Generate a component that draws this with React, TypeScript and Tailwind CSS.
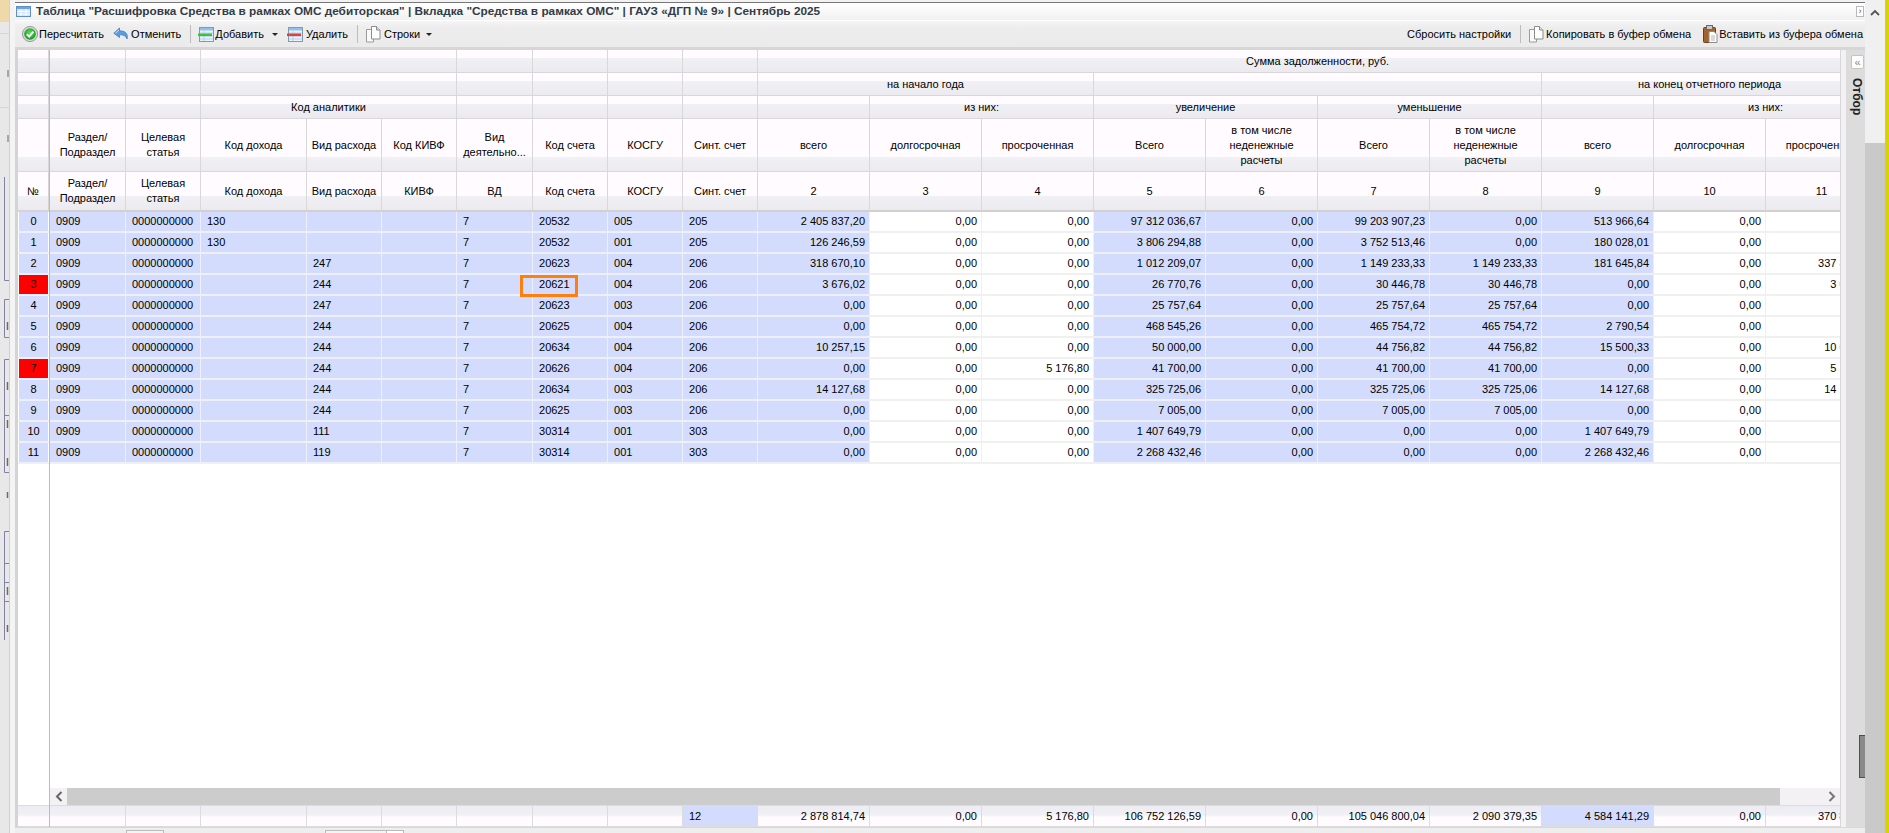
import type { ReactNode } from "react";

const colClasses = [
  "w-[76px]", "w-[75px]", "w-[106px]", "w-[75px]", "w-[75px]", "w-[76px]", "w-[75px]", "w-[75px]", "w-[75px]",
  "w-[112px]", "w-[112px]", "w-[112px]", "w-[112px]", "w-[112px]", "w-[112px]", "w-[112px]", "w-[112px]", "w-[112px]", "w-[112px]",
];

const whiteCols = [10, 11, 17, 18];
const leftCols = 9;

type HeadCell = { text?: ReactNode; span?: number };

const blank = (n: number): HeadCell[] => Array.from({ length: n }, () => ({}));

const headRows: { cls: string; cells: HeadCell[] }[] = [
  {
    cls: "h-[23px]",
    cells: [...blank(2), { span: 3 }, ...blank(4), { text: "Сумма задолженности, руб.", span: 10 }],
  },
  {
    cls: "h-[23px]",
    cells: [
      ...blank(2), { span: 3 }, ...blank(4),
      { text: "на начало года", span: 3 }, { span: 4 }, { text: "на конец отчетного периода", span: 3 },
    ],
  },
  {
    cls: "h-[23px]",
    cells: [
      ...blank(2), { text: "Код аналитики", span: 3 }, ...blank(4),
      {}, { text: "из них:", span: 2 }, { text: "увеличение", span: 2 }, { text: "уменьшение", span: 2 },
      {}, { text: "из них:", span: 2 },
    ],
  },
  {
    cls: "h-[53px]",
    cells: [
      { text: <>Раздел/<br />Подраздел</> }, { text: <>Целевая<br />статья</> }, { text: "Код дохода" }, { text: "Вид расхода" },
      { text: "Код КИВФ" }, { text: <>Вид<br />деятельно...</> }, { text: "Код счета" }, { text: "КОСГУ" }, { text: "Синт. счет" },
      { text: "всего" }, { text: "долгосрочная" }, { text: "просроченная" }, { text: "Всего" },
      { text: <>в том числе<br />неденежные<br />расчеты</> }, { text: "Всего" },
      { text: <>в том числе<br />неденежные<br />расчеты</> }, { text: "всего" }, { text: "долгосрочная" }, { text: "просроченная" },
    ],
  },
  {
    cls: "h-[40px]",
    cells: [
      { text: <>Раздел/<br />Подраздел</> }, { text: <>Целевая<br />статья</> }, { text: "Код дохода" }, { text: "Вид расхода" },
      { text: "КИВФ" }, { text: "ВД" }, { text: "Код счета" }, { text: "КОСГУ" }, { text: "Синт. счет" },
      { text: "2" }, { text: "3" }, { text: "4" }, { text: "5" }, { text: "6" }, { text: "7" }, { text: "8" }, { text: "9" }, { text: "10" }, { text: "11" },
    ],
  },
];

const rows: string[][] = [
  ["130", "", "", "7", "20532", "005", "205", "2 405 837,20", "0,00", "0,00", "97 312 036,67", "0,00", "99 203 907,23", "0,00", "513 966,64", "0,00", "0,00"],
  ["130", "", "", "7", "20532", "001", "205", "126 246,59", "0,00", "0,00", "3 806 294,88", "0,00", "3 752 513,46", "0,00", "180 028,01", "0,00", "0,00"],
  ["", "247", "", "7", "20623", "004", "206", "318 670,10", "0,00", "0,00", "1 012 209,07", "0,00", "1 149 233,33", "1 149 233,33", "181 645,84", "0,00", "337 845,67"],
  ["", "244", "", "7", "20621", "004", "206", "3 676,02", "0,00", "0,00", "26 770,76", "0,00", "30 446,78", "30 446,78", "0,00", "0,00", "3 076,02"],
  ["", "247", "", "7", "20623", "003", "206", "0,00", "0,00", "0,00", "25 757,64", "0,00", "25 757,64", "25 757,64", "0,00", "0,00", "0,00"],
  ["", "244", "", "7", "20625", "004", "206", "0,00", "0,00", "0,00", "468 545,26", "0,00", "465 754,72", "465 754,72", "2 790,54", "0,00", "0,00"],
  ["", "244", "", "7", "20634", "004", "206", "10 257,15", "0,00", "0,00", "50 000,00", "0,00", "44 756,82", "44 756,82", "15 500,33", "0,00", "10 033,15"],
  ["", "244", "", "7", "20626", "004", "206", "0,00", "0,00", "5 176,80", "41 700,00", "0,00", "41 700,00", "41 700,00", "0,00", "0,00", "5 176,80"],
  ["", "244", "", "7", "20634", "003", "206", "14 127,68", "0,00", "0,00", "325 725,06", "0,00", "325 725,06", "325 725,06", "14 127,68", "0,00", "14 127,68"],
  ["", "244", "", "7", "20625", "003", "206", "0,00", "0,00", "0,00", "7 005,00", "0,00", "7 005,00", "7 005,00", "0,00", "0,00", "0,00"],
  ["", "111", "", "7", "30314", "001", "303", "0,00", "0,00", "0,00", "1 407 649,79", "0,00", "0,00", "0,00", "1 407 649,79", "0,00", "0,00"],
  ["", "119", "", "7", "30314", "001", "303", "0,00", "0,00", "0,00", "2 268 432,46", "0,00", "0,00", "0,00", "2 268 432,46", "0,00", "0,00"],
];

const totals = ["", "", "", "", "", "", "", "", "12", "2 878 814,74", "0,00", "5 176,80", "106 752 126,59", "0,00", "105 046 800,04", "2 090 379,35", "4 584 141,29", "0,00", "370 857,47"];

const headBg =
  "bg-[linear-gradient(to_bottom,#fffbff_0,#fffbff_calc(100%-14px),#f0f1f5_calc(100%-14px),#eceaee_100%)]";
const footBg = "bg-[linear-gradient(to_bottom,#ecedf3_0,#f0f0f5_45%,#fffbff_55%,#fffbff_100%)]";

const Cols = () => (
  <colgroup>
    {colClasses.map((c, i) => (
      <col key={i} className={c} />
    ))}
  </colgroup>
);

const CheckIcon = () => (
  <svg width="16" height="16" viewBox="0 0 16 16" className="shrink-0">
    <defs>
      <radialGradient id="chk" cx="50%" cy="40%" r="60%">
        <stop offset="0" stopColor="#5fdc5a" />
        <stop offset="1" stopColor="#0f9a1e" />
      </radialGradient>
    </defs>
    <circle cx="8" cy="8" r="7.6" fill="#d8d8d8" stroke="#8a8a8a" strokeWidth="0.8" />
    <circle cx="8" cy="8" r="5.8" fill="url(#chk)" />
    <path d="M4.8 8.2 7.2 10.6 11.4 5.6" fill="none" stroke="#fff" strokeWidth="2" />
  </svg>
);

const UndoIcon = () => (
  <svg width="16" height="14" viewBox="0 0 16 14" className="shrink-0">
    <path d="M6.5 1 .8 6.2 6.5 10.5V7.8C10 7.6 12.5 8.5 14 12 15.6 7 12 3.6 6.5 3.8Z" fill="#5b9fe0" stroke="#3a76b8" strokeWidth="0.7" />
    <path d="M6 3 2.4 6.2" stroke="#cfe6fb" strokeWidth="1" />
  </svg>
);

const GridIcon = ({ bar }: { bar?: string }) => (
  <svg width="16" height="15" viewBox="0 0 16 15" className="shrink-0">
    <rect x="1.5" y="0.5" width="14" height="14" fill="#eaf3fb" stroke="#7f9bb0" />
    <rect x="2" y="1" width="13" height="2.5" fill="#8fc1ea" />
    <path d="M2 6h13M2 9h13M2 12h13M6 3.5V14" stroke="#b7d3e8" strokeWidth="1" />
    {bar && <rect x="0" y="6.5" width="14" height="2.6" fill={bar} />}
  </svg>
);

const PagesIcon = () => (
  <svg width="15" height="17" viewBox="0 0 15 17" className="shrink-0">
    <path d="M.5 3.5h5l2 2V16H.5Z" fill="#fafafa" stroke="#9a9a9a" />
    <path d="M5.5.5h5l3.5 3.5v9h-8.500Z" fill="#fff" stroke="#8c8c8c" />
    <path d="M10.500.5V4H14" fill="#dfe6ea" stroke="#8c8c8c" />
  </svg>
);

const PasteIcon = () => (
  <svg width="15" height="18" viewBox="0 0 15 18" className="shrink-0">
    <rect x="0.500" y="2.500" width="12" height="15" rx="1" fill="#a5622a" stroke="#6f3f17" />
    <rect x="3.500" y="0.500" width="6" height="4" fill="#c9c9c9" stroke="#6b6b6b" />
    <path d="M6 6.500h5l3 3v8H6Z" fill="#fff" stroke="#8c8c8c" />
    <path d="M8 11h4M8 13h4M8 15h4" stroke="#b5b5b5" />
  </svg>
);

const TableIcon = () => (
  <svg width="15" height="11" viewBox="0 0 15 11" className="shrink-0">
    <rect x="0.500" y="0.500" width="14" height="10" fill="#cfe3fa" stroke="#5f8fc4" />
    <rect x="1" y="1" width="13" height="2" fill="#6da4e2" />
    <path d="M1 5.500h13M1 8h13M5 3v7M10 3v7" stroke="#fff" />
  </svg>
);

const Caret = () => (
  <svg width="6" height="3" viewBox="0 0 6 3" className="shrink-0">
    <path d="M0 0h6L3 3Z" fill="#222" />
  </svg>
);

const Sep = () => <div className="h-[18px] w-px bg-[#bdbdbd]" />;

// the windows behind the dialog peek out along the left edge
const BackdropEdge = () => (
  <svg width="9" height="833" viewBox="0 0 9 833" className="block">
    <rect width="9" height="22" fill="#f0d9a9" />
    <path d="M0 33.500h9M0 107.500h9" stroke="#d6d6d6" />
    <path d="M4.500 177V280.500H9M9 299.500H4.500V337.500H9M9 359.500H4.500V472.500H9M4.500 415.500H9M9 531.500H4.500V640M4.500 563.500H9M4.500 582.500H9M4.500 601.500H9" fill="none" stroke="#7d82a6" />
    <path d="M7.500 322v8M7.500 382v8M7.500 420v8M7.500 458v8M7.500 492v6M7.500 587v8M7.500 625v7" stroke="#7a6a48" strokeWidth="1.500" />
    <path d="M8 70v7M8 135v7" stroke="#666" />
  </svg>
);

export default function App() {
  return (
    <div className="flex h-[833px] w-[1889px] overflow-hidden bg-[#e8e8e8] font-['Liberation_Sans',Arial,sans-serif] text-[11px] leading-none text-black">
      <div className="w-[9px] shrink-0">
        <BackdropEdge />
      </div>
      <div className="w-px shrink-0 bg-[#d0d0d0]" />
      <div className="w-[5px] shrink-0 bg-[#f4f4f4]" />

      {/* window */}
      <div className="flex w-[1850px] shrink-0 flex-col">
        <div className="h-[2px] bg-[#f2f2f2]" />
        <div className="h-px bg-[#777777]" />

        {/* title */}
        <div className="flex h-[17px] items-center bg-[linear-gradient(to_bottom,#ffffff,#f1f1f1)] pl-[1px] pr-[1px]">
          <TableIcon />
          <span className="ml-[5px] text-[11.8px] font-bold text-[#333b45]">
            Таблица "Расшифровка Средства в рамках ОМС дебиторская" | Вкладка "Средства в рамках ОМС" | ГАУЗ «ДГП № 9» | Сентябрь 2025
          </span>
          <div className="ml-auto flex h-[11px] w-[8px] items-center justify-center border border-[#b8b8b8] bg-white text-[9px] text-[#555]">
            ›
          </div>
        </div>

        {/* toolbar */}
        <div className="flex h-[27px] items-center border-t border-white bg-[linear-gradient(to_bottom,#f5f5f5,#ededed_25%,#ebebeb)] pl-[7px] pr-[2px]">
          <CheckIcon />
          <span className="ml-[1px]">Пересчитать</span>
          <div className="ml-[9px]"><UndoIcon /></div>
          <span className="ml-[2px]">Отменить</span>
          <div className="ml-[9px]"><Sep /></div>
          <div className="ml-[7px]"><GridIcon bar="#3fbf3f" /></div>
          <span className="ml-[1px]">Добавить</span>
          <div className="ml-[8px]"><Caret /></div>
          <div className="ml-[9px]"><GridIcon bar="#e2403a" /></div>
          <span className="ml-[3px]">Удалить</span>
          <div className="ml-[9px]"><Sep /></div>
          <div className="ml-[8px]"><PagesIcon /></div>
          <span className="ml-[3px]">Строки</span>
          <div className="ml-[6px]"><Caret /></div>

          <span className="ml-auto">Сбросить настройки</span>
          <div className="ml-[9px]"><Sep /></div>
          <div className="ml-[8px]"><PagesIcon /></div>
          <span className="ml-[2px]">Копировать в буфер обмена</span>
          <div className="ml-[12px]"><PasteIcon /></div>
          <span className="ml-[1px]">Вставить из буфера обмена</span>
        </div>

        {/* grid + filter panel */}
        <div className="flex min-h-0 flex-1 border-t-[3px] border-[#d6d6d6] bg-[#f3f1f3]">
          <div className="w-[3px] shrink-0 bg-[#d4d4d4]" />

          {/* frozen № column */}
          <div className="flex w-[32px] shrink-0 flex-col border-r border-[#a9bdea] bg-white">
            {["h-[23px]", "h-[23px]", "h-[23px]", "h-[53px]"].map((h, i) => (
              <div key={i} className={`${h} border-r border-b border-[#d8d8d8] ${headBg}`} />
            ))}
            <div className={`flex h-[40px] items-center justify-center border-r border-b-2 border-[#d4d4d4] ${headBg}`}>№</div>
            {rows.map((_, i) => (
              <div key={i} className="h-[21px] border-b-2 border-[#eef0f8] pl-px pr-px">
                <div className={`flex h-[19px] items-center justify-center ${i === 3 || i === 7 ? "bg-[#ff0000]" : "bg-[#d3dcfc]"}`}>
                  {i}
                </div>
              </div>
            ))}
            <div className="flex-1" />
            <div className={`h-[22px] border-t border-b border-[#dcdcdc] ${footBg}`} />
          </div>

          {/* scrolling part */}
          <div className="flex w-[1791px] shrink-0 flex-col overflow-hidden border-r border-[#d8d6d8] bg-white">
            <div className="relative flex-1 overflow-hidden">
              <table className="w-[1828px] table-fixed border-separate border-spacing-0">
                <Cols />
                <thead>
                  {headRows.map((r, ri) => (
                    <tr key={ri} className={r.cls}>
                      {r.cells.map((c, ci) => (
                        <th
                          key={ci}
                          colSpan={c.span}
                          className={`overflow-hidden border-r border-[#d8d8d8] p-0 text-center align-middle leading-[15px] font-normal whitespace-nowrap text-black ${headBg} ${ri === 4 ? "border-b-2 border-b-[#d0d0d0]" : "border-b border-b-[#d8d8d8]"}`}
                        >
                          {c.text}
                        </th>
                      ))}
                    </tr>
                  ))}
                </thead>
                <tbody>
                  {rows.map((r, ri) => (
                    <tr key={ri} className="h-[21px]">
                      {["0909", "0000000000", ...r].map((v, ci) => (
                        <td
                          key={ci}
                          className={`overflow-hidden border-r border-b-2 p-0 whitespace-nowrap ${whiteCols.includes(ci) ? "border-[#f0f0f0] bg-white" : "border-[#eef0f8] bg-[#d3dcfc]"} ${ci < leftCols ? "pl-[6px] text-left" : "pr-[4px] text-right"}`}
                        >
                          {v}
                        </td>
                      ))}
                    </tr>
                  ))}
                </tbody>
              </table>
              {/* hand-drawn mark on the screenshot */}
              <div className="absolute top-[225px] left-[470px] h-[22px] w-[58px] border-[3px] border-[#ff7f0e]" />
            </div>

            {/* horizontal scrollbar */}
            <div className="flex h-[17px] shrink-0 bg-[#f3f1f3]">
              <div className="flex w-[17px] items-center justify-center">
                <svg width="8" height="11" viewBox="0 0 8 11"><path d="M6.500 1 2 5.500 6.500 10" fill="none" stroke="#666" strokeWidth="2" /></svg>
              </div>
              <div className="w-[1713px] bg-[#cccccc]" />
              <div className="flex flex-1 items-center justify-end pr-[4px]">
                <svg width="8" height="11" viewBox="0 0 8 11"><path d="M1.500 1 6 5.500 1.500 10" fill="none" stroke="#777" strokeWidth="2" /></svg>
              </div>
            </div>

            {/* totals */}
            <table className="w-[1828px] shrink-0 table-fixed border-separate border-spacing-0">
              <Cols />
              <tbody>
                <tr className="h-[22px]">
                  {totals.map((v, ci) => (
                    <td
                      key={ci}
                      className={`overflow-hidden border-t border-r border-b border-[#dcdcdc] p-0 whitespace-nowrap ${ci === 8 || ci === 16 ? "bg-[#d3dcfc]" : footBg} ${ci < leftCols ? "pl-[6px] text-left" : "pr-[4px] text-right"}`}
                    >
                      {v}
                    </td>
                  ))}
                </tr>
              </tbody>
            </table>
          </div>

          {/* filter panel, collapsed */}
          <div className="w-[5px] shrink-0 bg-[#f3f1f3]" />
          <div className="relative flex flex-1 flex-col items-center bg-[#dcdcdc]">
            <div className="mt-[5px] ml-[4px] flex h-[14px] w-[13px] items-center justify-center rounded-[2px] border border-[#c4c4c4] bg-white text-[11px] text-[#888]">
              «
            </div>
            <span className="mt-[9px] ml-[3px] text-[12px] font-bold text-[#222] [writing-mode:vertical-rl]">Отбор</span>
            <div className="absolute top-[685px] right-0 h-[43px] w-[6px] border-y border-l border-[#e01010] bg-[#8a8a8a]" />
          </div>
        </div>

        {/* pager, cut off by the bottom of the window */}
        <div className="flex h-[6px] shrink-0 overflow-hidden border-t border-[#d8d8d8] bg-[#eeeeee] pt-[2px]">
          <div className="ml-[111px] h-[8px] w-[38px] border border-[#bbbbbb] bg-[#f4f4f4]" />
          <div className="ml-[161px] h-[8px] w-[62px] border border-[#bbbbbb] bg-[#f4f4f4]" />
          <div className="h-[8px] w-[17px] border border-l-0 border-[#bbbbbb] bg-white" />
        </div>
      </div>

      {/* page scrollbar */}
      <div className="flex w-[20px] shrink-0 flex-col bg-[#c9c9c9]">
        <div className="flex h-[143px] justify-center bg-[#f0f0f0] pt-[9px]">
          <svg width="10" height="7" viewBox="0 0 10 7"><path d="M1 6 5 2 9 6" fill="none" stroke="#555" strokeWidth="1.800" /></svg>
        </div>
      </div>
      <div className="w-[4px] shrink-0 bg-[#d9d400]" />
    </div>
  );
}
